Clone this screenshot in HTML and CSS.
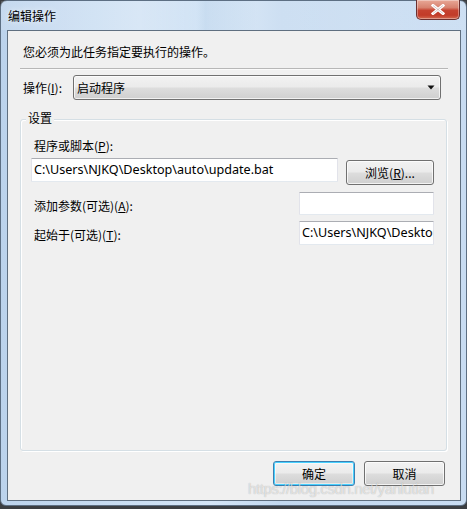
FILE: index.html
```html
<!DOCTYPE html>
<html lang="zh-CN">
<head>
<meta charset="utf-8">
<title>编辑操作</title>
<link rel="stylesheet" href="styles.css">
</head>
<body>
<div class="window">
  <div class="titlebar">
    <span class="title">编辑操作</span>
    <div class="close"><svg width="14" height="11" viewBox="0 0 14 11"><path d="M2 1.5 L12 9.5 M12 1.5 L2 9.5" stroke="#fff" stroke-width="3" stroke-linecap="square"/><path d="M2 1.5 L12 9.5 M12 1.5 L2 9.5" stroke="#5a3030" stroke-opacity="0.25" stroke-width="1"/></svg></div>
  </div>
  <div class="client">
    <p class="instruction">您必须为此任务指定要执行的操作。</p>
    <div class="separator"></div>
    <div class="op-row">
      <span class="op-label">操作(<u>I</u>):</span>
      <div class="combo">
        <span class="combo-text">启动程序</span>
        <svg class="combo-arrow" width="8" height="5" viewBox="0 0 8 5"><path d="M0.5 0.5 H7.5 L4 4.5 Z" fill="#111"/></svg>
      </div>
    </div>
    <div class="group">
      <span class="legend">设置</span>
      <div class="field-label">程序或脚本(<u>P</u>):</div>
      <div class="row1">
        <div class="input wide">C:\Users\NJKQ\Desktop\auto\update.bat</div>
        <div class="btn browse">浏览(<u>R</u>)...</div>
      </div>
      <div class="row">
        <span class="row-label">添加参数(可选)(<u>A</u>):</span>
        <div class="input small short"></div>
      </div>
      <div class="row row3">
        <span class="row-label">起始于(可选)(<u>T</u>):</span>
        <div class="input small">C:\Users\NJKQ\Desktop</div>
      </div>
    </div>
    <div class="footer">
      <div class="btn default">确定</div>
      <div class="btn">取消</div>
    </div>
    <div class="watermark">https://blog.csdn.net/yanlutian</div>
  </div>
</div>
</body>
</html>
```

FILE: styles.css
```css
* { box-sizing: border-box; }
html, body { margin: 0; padding: 0; }
body {
  width: 467px;
  height: 509px;
  background: #3b3e42;
  font-family: "Noto Sans CJK SC", "Noto Sans", sans-serif;
  font-size: 12px;
  color: #000;
  overflow: hidden;
}
.window {
  position: relative;
  width: 467px;
  height: 506px;
  border: 1px solid #5d6f83;
  border-radius: 7px 7px 6px 6px;
  background: linear-gradient(90deg, #bcd3ec 0%, #c6dbf1 20%, #d4e5f6 45%, #c2d8ef 60%, #c8dcf2 100%);
  display: flex;
  flex-direction: column;
}
.titlebar {
  height: 29px;
  display: flex;
  align-items: center;
  padding-left: 7px;
  background: linear-gradient(90deg, rgba(255,255,255,0.15) 0%, rgba(255,255,255,0.25) 30%, rgba(255,255,255,0) 42%, rgba(180,205,230,0.35) 44%, rgba(255,255,255,0.2) 55%, rgba(255,255,255,0.1) 100%);
}
.title {
  line-height: 16px;
  color: #000;
  text-shadow: 0 0 6px rgba(255,255,255,0.9);
}
.close {
  position: absolute;
  top: -1px;
  right: 6px;
  width: 44px;
  height: 20px;
  border: 1px solid #6b3030;
  border-top: none;
  border-radius: 0 0 5px 5px;
  background: linear-gradient(180deg, #e8a897 0%, #d7826f 40%, #c5412f 55%, #c23b29 80%, #d2684f 100%);
  display: flex;
  align-items: center;
  justify-content: center;
  box-shadow: inset 0 0 0 1px rgba(255,255,255,0.35);
}
.client {
  position: relative;
  margin-left: 6px;
  width: 454px;
  height: 471px;
  border: 1px solid #5f6f80;
  background: #f0f0f0;
  padding-top: 13px;
}
.instruction {
  margin: 0 0 0 15px;
  line-height: 16px;
  height: 16px;
}
.separator {
  margin: 8px 0 0 12px;
  width: 428px;
  border-top: 1px solid #a0a0a0;
  border-bottom: 1px solid #ffffff;
  opacity: 0.7;
}
.op-row {
  margin-top: 5px;
  display: flex;
  align-items: center;
  padding-left: 15px;
  height: 25px;
}
.op-label {
  width: 50px;
  line-height: 16px;
}
.combo {
  width: 368px;
  height: 25px;
  border: 1px solid #707070;
  border-radius: 3px;
  background: linear-gradient(180deg, #f2f2f2 0%, #ebebeb 48%, #dddddd 52%, #cfcfcf 100%);
  box-shadow: inset 0 0 0 1px rgba(255,255,255,0.7);
  display: flex;
  align-items: center;
  justify-content: space-between;
  padding: 0 4px 0 3px;
}
.combo-text { line-height: 16px; }
.combo-arrow { margin-right: 1px; }
.group {
  position: relative;
  margin: 19px 0 0 12px;
  width: 427px;
  height: 332px;
  border: 1px solid #d5dfe5;
  border-radius: 3px;
  box-shadow: inset 1px 1px 0 #fff, 1px 1px 0 #fff;
  padding: 18px 12px 0 10px;
}
.legend {
  position: absolute;
  top: -10px;
  left: 5px;
  padding: 0 2px;
  background: #f0f0f0;
  line-height: 16px;
}
.field-label {
  margin-left: 3px;
  line-height: 16px;
}
.row1 {
  margin-top: 4px;
  display: flex;
  align-items: flex-start;
  gap: 8px;
}
.input {
  height: 24px;
  background: #fff;
  border: 1px solid #e2e3ea;
  border-top-color: #abadb3;
  border-bottom-color: #e3e9ef;
  border-radius: 1px;
  padding: 0 0 0 2px;
  line-height: 21px;
  white-space: nowrap;
  overflow: hidden;
  font-family: "Noto Sans", "Noto Sans CJK SC", sans-serif;
  font-size: 12.6px;
}
.input.wide { width: 307px; }
.input.small { width: 135px; }
.input.short { height: 23px; }
.btn {
  height: 25px;
  border: 1px solid #707070;
  border-radius: 3px;
  background: linear-gradient(180deg, #f2f2f2 0%, #ebebeb 48%, #dddddd 52%, #cfcfcf 100%);
  box-shadow: inset 0 0 0 1px rgba(255,255,255,0.75);
  display: flex;
  align-items: center;
  justify-content: center;
  line-height: 16px;
}
.browse {
  width: 88px;
  margin-top: 2px;
}
.row {
  margin-top: 7px;
  display: flex;
  justify-content: space-between;
  align-items: flex-start;
  margin-left: 3px;
}
.row3 { margin-top: 6px; }
.row-label {
  line-height: 16px;
  margin-top: 6px;
}
.footer {
  margin-top: 10px;
  display: flex;
  justify-content: flex-end;
  gap: 9px;
  padding-right: 15px;
}
.footer .btn { width: 81px; }
.footer .btn.default {
  width: 82px;
  border-color: #3c7fb1;
  box-shadow: inset 0 0 0 1px #48d1ff, inset 0 0 0 2px rgba(255,255,255,0.5);
}
.watermark {
  position: absolute;
  left: 240px;
  top: 449px;
  font-family: "Liberation Sans", Arial, sans-serif;
  font-size: 15px;
  letter-spacing: -0.4px;
  color: rgba(255,255,255,0.6);
  text-shadow: 0 0 1px rgba(0,0,0,0.3);
  white-space: nowrap;
  pointer-events: none;
}
```
